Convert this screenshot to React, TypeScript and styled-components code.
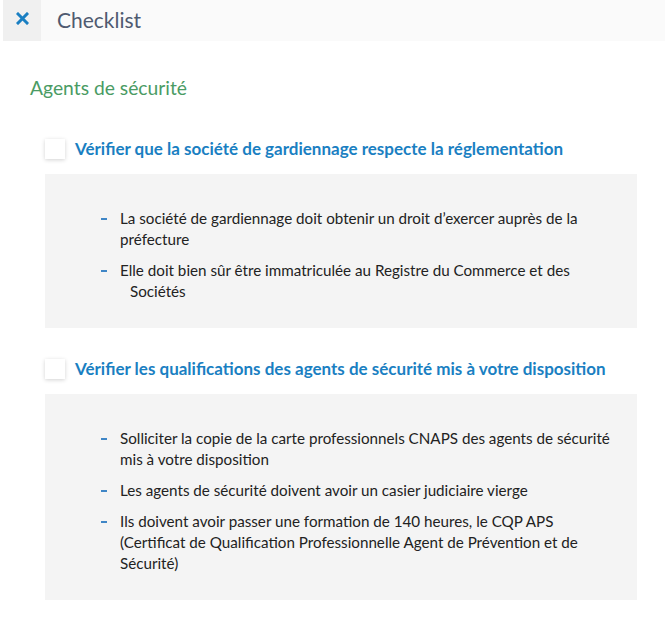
import styled, { createGlobalStyle } from "styled-components";

const GlobalStyle = createGlobalStyle`
  body {
    margin: 0;
    background: #ffffff;
    font-family: Lato, "Liberation Sans", sans-serif;
  }
`;

const Header = styled.header`
  display: flex;
  align-items: stretch;
  height: 41px;
  margin-left: 3px;
  background: #fafafa;
`;

const CloseButton = styled.button`
  width: 38px;
  border: none;
  padding: 0;
  background: #f0f0f0;
  display: flex;
  align-items: center;
  justify-content: center;
  padding-bottom: 4px;
  cursor: pointer;
`;

const HeaderTitle = styled.h1`
  margin: 0 0 0 16px;
  align-self: center;
  font-size: 21px;
  font-weight: 400;
  color: #4f5a70;
  padding-bottom: 2px;
`;

const Content = styled.main`
  padding: 0 28px 30px 30px;
`;

const SectionTitle = styled.h2`
  margin: 35px 0 0;
  font-size: 19.3px;
  font-weight: 400;
  color: #4a9b64;
`;

const Item = styled.section<{ $first?: boolean }>`
  margin: ${(p) => (p.$first ? "39px" : "30px")} 0 0 15px;
`;

const ItemHeader = styled.label`
  display: flex;
  align-items: center;
  gap: 10px;
`;

const Checkbox = styled.span`
  width: 20px;
  height: 20px;
  background: #ffffff;
  box-shadow: 0 1px 4px rgba(0, 0, 0, 0.18);
  flex-shrink: 0;
`;

const ItemTitle = styled.h3`
  margin: 0;
  font-size: 17px;
  font-weight: 700;
  color: #1a7fc2;
`;

const Panel = styled.div<{ $bottom: number }>`
  margin-top: 15px;
  background: #f4f4f4;
  padding: 34px 0 ${(p) => p.$bottom}px 56px;
`;

const List = styled.ul`
  list-style: none;
  margin: 0;
  padding: 0;
  display: flex;
  flex-direction: column;
  gap: 10px;
`;

const Point = styled.li`
  position: relative;
  padding-left: 19px;
  font-size: 15.2px;
  line-height: 21px;
  color: #222222;

  &::before {
    content: "";
    position: absolute;
    left: 0;
    top: 10px;
    width: 6px;
    height: 2px;
    background: #3f86c6;
  }
`;

const Line = styled.span<{ $indent?: number }>`
  display: block;
  white-space: nowrap;
  padding-left: ${(p) => p.$indent ?? 0}px;
`;

const sections = [
  {
    title: "Vérifier que la société de gardiennage respecte la réglementation",
    bottom: 26,
    points: [
      [{ t: "La société de gardiennage doit obtenir un droit d’exercer auprès de la" }, { t: "préfecture" }],
      [{ t: "Elle doit bien sûr être immatriculée au Registre du Commerce et des" }, { t: "Sociétés", indent: 10 }],
    ],
  },
  {
    title: "Vérifier les qualifications des agents de sécurité mis à votre disposition",
    bottom: 26,
    points: [
      [{ t: "Solliciter la copie de la carte professionnels CNAPS des agents de sécurité" }, { t: "mis à votre disposition" }],
      [{ t: "Les agents de sécurité doivent avoir un casier judiciaire vierge" }],
      [
        { t: "Ils doivent avoir passer une formation de 140 heures, le CQP APS" },
        { t: "(Certificat de Qualification Professionnelle Agent de Prévention et de" },
        { t: "Sécurité)" },
      ],
    ],
  },
];

function App() {
  return (
    <>
      <GlobalStyle />
      <Header>
        <CloseButton aria-label="Fermer">
          <svg width="13" height="13" viewBox="0 0 13 13">
            <path d="M2 2 L11 11 M11 2 L2 11" stroke="#1a7fc2" strokeWidth="3" strokeLinecap="square" />
          </svg>
        </CloseButton>
        <HeaderTitle>Checklist</HeaderTitle>
      </Header>
      <Content>
        <SectionTitle>Agents de sécurité</SectionTitle>
        {sections.map((s, i) => (
          <Item key={s.title} $first={i === 0}>
            <ItemHeader>
              <Checkbox />
              <ItemTitle>{s.title}</ItemTitle>
            </ItemHeader>
            <Panel $bottom={s.bottom}>
              <List>
                {s.points.map((lines, j) => (
                  <Point key={j}>
                    {lines.map((l: { t: string; indent?: number }) => (
                      <Line key={l.t} $indent={l.indent}>
                        {l.t}
                      </Line>
                    ))}
                  </Point>
                ))}
              </List>
            </Panel>
          </Item>
        ))}
      </Content>
    </>
  );
}

export default App;
